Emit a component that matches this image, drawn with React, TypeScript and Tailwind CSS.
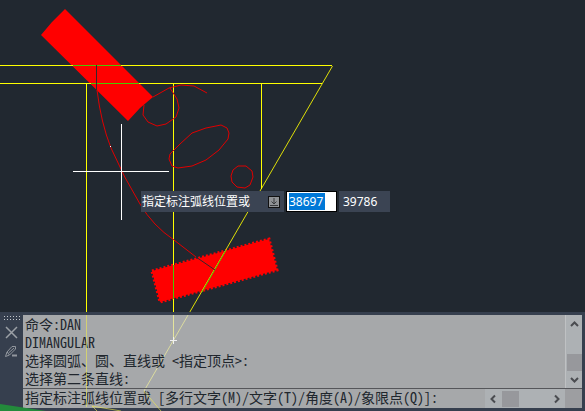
import { useState } from "react";

const SCROLL_ICON = "block fill-none stroke-[#4a4c50] stroke-[2]";

function Drawing() {
  return (
    <svg className="absolute inset-0 w-full h-full" fill="none" aria-hidden="true">
      {/* hatched walls */}
      <path d="M65 9L153 97L140 108L128 121L41 35L52 22Z" fill="#ff0000" />
      <path d="M152 271L269 239L277 270L160 302Z" fill="#ff0000" stroke="#ff0000" strokeWidth="3" strokeDasharray="2 2" />

      {/* outline */}
      <g stroke="#ffff00">
        <path d="M0 65.5H332M0 83.5H322M86.5 84V315M173.5 84V340M261.5 84V189" />
        <path d="M332.5 66L144 391" strokeOpacity="0.85" />
      </g>
      <g stroke="#4ac800">
        <path d="M73 65.5H121M91 83.5H139M173.5 265V299M226 250L202 292" />
      </g>

      {/* furniture and arc */}
      <g stroke="#e00000">
        <path d="M97 90Q101 123 111 148Q124 178 140 204Q153 226 174 240L196 257" />
        <path d="M153 97L169 88L181 85L194 86L207 93" />
        <path d="M144 105L143 115L148 122L157 126L166 124L176 117L179 108L177 99L170 88" />
        <path d="M169 159L170 154L180 144L192 133L206 128L221 125L227 128L229 133L228 139L219 150L206 160L192 166L178 168L172 166Z" />
        <path d="M238 166L246 166L252 171L253 177L250 185L245 188L237 187L232 182L231 176L233 170Z" />
      </g>
      <path d="M96.5 65V90M196 257L215 270" stroke="#33282c" />

      {/* crosshair */}
      <path d="M73 171.5H169M121.5 124V220" stroke="#ffffff" />
      <path d="M110 146.5H111" stroke="#ffffff" />
    </svg>
  );
}

function DynamicInput() {
  const [x, setX] = useState("38697");

  return (
    <div className="absolute left-[141px] top-[191px] flex h-[21px] items-center gap-[2px] font-['Noto_Sans','Noto_Sans_CJK_SC',sans-serif] text-[12px] leading-[22px] text-white">
      <label htmlFor="coord-x" className="flex h-full w-[143px] items-center justify-between bg-[#3b4453] pl-px pr-1 whitespace-nowrap">
        指定标注弧线位置或
        <svg className="h-3 w-3" fill="none" stroke="#111111" aria-hidden="true">
          <rect x="0.5" y="0.5" width="11" height="11" fill="#909295" />
          <path d="M6 2V8M3.5 5.5L6 8L8.5 5.5M2 9.5H10" stroke="#383a3d" />
        </svg>
      </label>
      <div className="h-full w-[51px] border border-black bg-white px-[2px] py-px">
        <input
          id="coord-x"
          value={x}
          onChange={(e) => setX(e.target.value)}
          className="block h-[17px] w-9 bg-[#0078d7] text-[12px] text-white outline-none"
        />
      </div>
      <output className="h-full w-[51px] bg-[#3b4453] pl-1">39786</output>
    </div>
  );
}

function CommandPanel() {
  const [command, setCommand] = useState("指定标注弧线位置或 [多行文字(M)/文字(T)/角度(A)/象限点(Q)]:");

  return (
    <section className="relative flex border-t-[3px] border-[#363f4e] font-['Noto_Sans_Mono_CJK_SC','Noto_Sans_CJK_SC',monospace] text-[14px] text-[#20262d] [font-feature-settings:'hwid']">
      <div className="flex w-[23px] shrink-0 flex-col items-center bg-[#363f4e]">
        <svg className="mt-px h-[5px] w-4" fill="none" stroke="#c4c8cd" strokeDasharray="1 2" aria-hidden="true">
          <path d="M0 0.5H16M0 3.5H16" />
        </svg>
        <button aria-label="关闭" className="mt-1 h-4 w-4">
          <svg className="h-4 w-4" stroke="#9ba0a6" strokeWidth="1.5" aria-hidden="true">
            <path d="M2 2L13 13M13 2L2 13" />
          </svg>
        </button>
        <button aria-label="自定义" className="mt-1 h-4 w-4">
          <svg className="h-4 w-4" fill="none" stroke="#92979e" aria-hidden="true">
            <path d="M1.5 11.5L3 7L8 1.5H11.5V4L5.5 10ZM3 7L5.5 10M4.5 8L10 3" />
            <path d="M8 10.5H13" strokeWidth="2" />
          </svg>
        </button>
      </div>
      <div className="flex min-w-0 flex-1 flex-col">
        <div className="flex h-[74px] border-b border-[#55565a]">
          <div className="flex-1 bg-[#d9d9da]/72 pl-[2px] leading-[18px] whitespace-pre">
            <p>命令:DAN</p>
            <p>DIMANGULAR</p>
            <p>选择圆弧、圆、直线或 &lt;指定顶点&gt;:</p>
            <p>选择第二条直线:</p>
          </div>
          <div className="flex w-[17px] flex-col items-center border-l border-[#bfc1c3] bg-[#adb1b4]">
            <button aria-label="向上滚动"><svg width="15" height="18" className={SCROLL_ICON}><path d="M4 11L7.5 7.5L11 11" /></svg></button>
            <div className="mt-auto h-[17px] w-[15px] bg-[#97989c]" />
            <button aria-label="向下滚动"><svg width="15" height="17" className={SCROLL_ICON}><path d="M4 7L7.5 10.5L11 7" /></svg></button>
          </div>
        </div>
        <div className="flex h-[19px]">
          <input
            aria-label="命令行"
            value={command}
            onChange={(e) => setCommand(e.target.value)}
            className="min-w-0 flex-1 bg-[#d9d9da]/72 pb-[2px] pl-[2px] outline-none"
          />
          <div className="flex w-20 items-center bg-[#adb1b4]">
            <button aria-label="向左滚动"><svg width="17" height="16" className={SCROLL_ICON}><path d="M10 4.5L6.5 8L10 11.5" /></svg></button>
            <div className="h-4 w-[17px] bg-[#97989c]" />
            <button aria-label="向右滚动" className="ml-auto"><svg width="17" height="16" className={SCROLL_ICON}><path d="M7 4.5L10.5 8L7 11.5" /></svg></button>
          </div>
          <div className="w-[17px] bg-[#9d9ea1]" />
        </div>
        <div className="h-[3px] bg-[#363f4e]" />
      </div>
      <div className="w-[3px] shrink-0 bg-[#363f4e]" />

      {/* drawing lines that show through the panel */}
      <svg className="pointer-events-none absolute inset-0 h-full w-full" fill="none" aria-hidden="true">
        <path d="M0 89L46 96H0Z" fill="#238a3b" />
        <path d="M86.5 0V92M144 76L161 96M92 91L121 96M92 91L97 96" stroke="#f0ec50" strokeOpacity="0.6" />
        <path d="M170 25.5H177M173.5 22V29" stroke="#f0f0f0" />
      </svg>
    </section>
  );
}

export default function App() {
  return (
    <main className="relative flex min-h-screen flex-col justify-end overflow-hidden bg-[#212830]">
      <Drawing />
      <DynamicInput />
      <CommandPanel />
    </main>
  );
}
